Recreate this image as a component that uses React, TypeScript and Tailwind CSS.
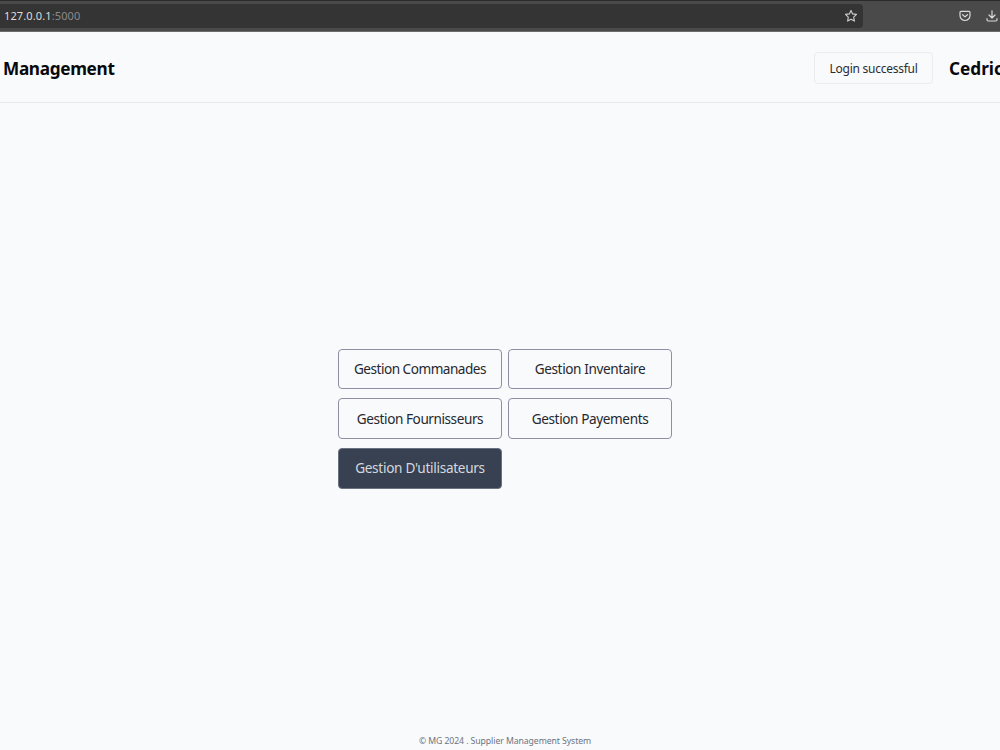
const links = [
  { label: "Gestion Commanades", spacing: "tracking-[-0.5px]" },
  { label: "Gestion Inventaire", spacing: "tracking-[-0.4px]" },
  { label: "Gestion Fournisseurs", spacing: "tracking-[-0.44px]" },
  { label: "Gestion Payements", spacing: "tracking-[-0.4px]" },
  { label: "Gestion D'utilisateurs", spacing: "tracking-[-0.3px]", active: true },
];

const StarIcon = () => (
  <svg width="14" height="14" viewBox="0 0 14 14" fill="none" stroke="#d0d0d0" strokeWidth="1.1" strokeLinejoin="round">
    <path d="M7 1.4 8.6 4.9 12.5 5.4 9.7 8.1 10.4 12.1 7 10.2 3.6 12.1 4.3 8.1 1.5 5.4 5.4 4.9Z" />
  </svg>
);

const PocketIcon = () => (
  <svg width="12" height="12" viewBox="0 0 12 12" fill="none" stroke="#d9d9d9" strokeWidth="1.2" strokeLinecap="round" strokeLinejoin="round">
    <path d="M2 1.4h8a1 1 0 0 1 1 1v3.1a5 5 0 0 1-10 0V2.4a1 1 0 0 1 1-1Z" />
    <path d="M3.6 4.7 6 6.9l2.4-2.2" />
  </svg>
);

const DownloadIcon = () => (
  <svg width="12" height="12" viewBox="0 0 12 12" fill="none" stroke="#d9d9d9" strokeWidth="1.2" strokeLinecap="round" strokeLinejoin="round">
    <path d="M6 .8v7M3 5l3 3 3-3" />
    <path d="M1 8.7v1.1a1.2 1.2 0 0 0 1.2 1.2h7.6A1.2 1.2 0 0 0 11 9.8V8.7" />
  </svg>
);

const BrowserBar = () => (
  <div className="flex h-8 shrink-0 items-center border-t border-b border-t-[#2b2b2b] border-b-[#6b6b6b] bg-[#4a4a4a]">
    <div className="flex h-6 w-[863px] shrink-0 items-center justify-between rounded-r bg-[#343434] pr-[5px] pl-1">
      <p className="pt-px text-[11px] tracking-[0.12px] whitespace-nowrap text-[#dcdcdc]">
        127.0.0.1<span className="text-[#8b8b8b]">:5000</span>
      </p>
      <StarIcon />
    </div>
    <div className="ml-[95.5px] flex shrink-0 items-center gap-[15px]">
      <PocketIcon />
      <DownloadIcon />
    </div>
  </div>
);

const Header = () => (
  <header className="flex h-[71px] shrink-0 items-center border-b border-[#e6e8ec] pt-[2px] pl-[3px]">
    <h1 className="pt-px text-[17.2px] font-bold tracking-[-0.32px] text-[#08090c]">Management</h1>
    <div className="ml-auto flex h-8 w-[119px] shrink-0 items-center justify-center rounded border border-[#eaecef] pt-px text-[12px] tracking-[-0.26px] whitespace-nowrap text-[#2a2d33]">
      Login successful
    </div>
    <div className="ml-4 w-[51px] shrink-0 overflow-hidden pt-px text-[17.2px] font-bold whitespace-nowrap text-[#08090c]">
      Cedric
    </div>
  </header>
);

const App = () => {
  return (
    <div className="flex h-[750px] w-[1000px] flex-col overflow-hidden bg-[#f9fafc] font-['Noto_Sans',sans-serif]">
      <BrowserBar />
      <Header />
      <main className="flex flex-1 pt-[245.6px] pl-[338px]">
        <div className="grid h-fit grid-cols-[164px_164px] gap-x-1.5 gap-y-[8.8px]">
          {links.map(({ label, spacing, active }) => (
            <button
              key={label}
              className={`h-[40.8px] rounded border pt-px text-[13.6px] whitespace-nowrap ${spacing} ${
                active
                  ? "border-[#6b7280] bg-[#384152] text-[#d5d8de]"
                  : "border-[#8d90a5] text-[#25282e]"
              }`}
            >
              {label}
            </button>
          ))}
        </div>
      </main>
      <footer className="pb-[2px] pl-[10px] text-center text-[8.7px] leading-[14px] tracking-[-0.08px] text-[#6d7480]">
        © MG 2024 . Supplier Management System
      </footer>
    </div>
  );
};

export default App;
